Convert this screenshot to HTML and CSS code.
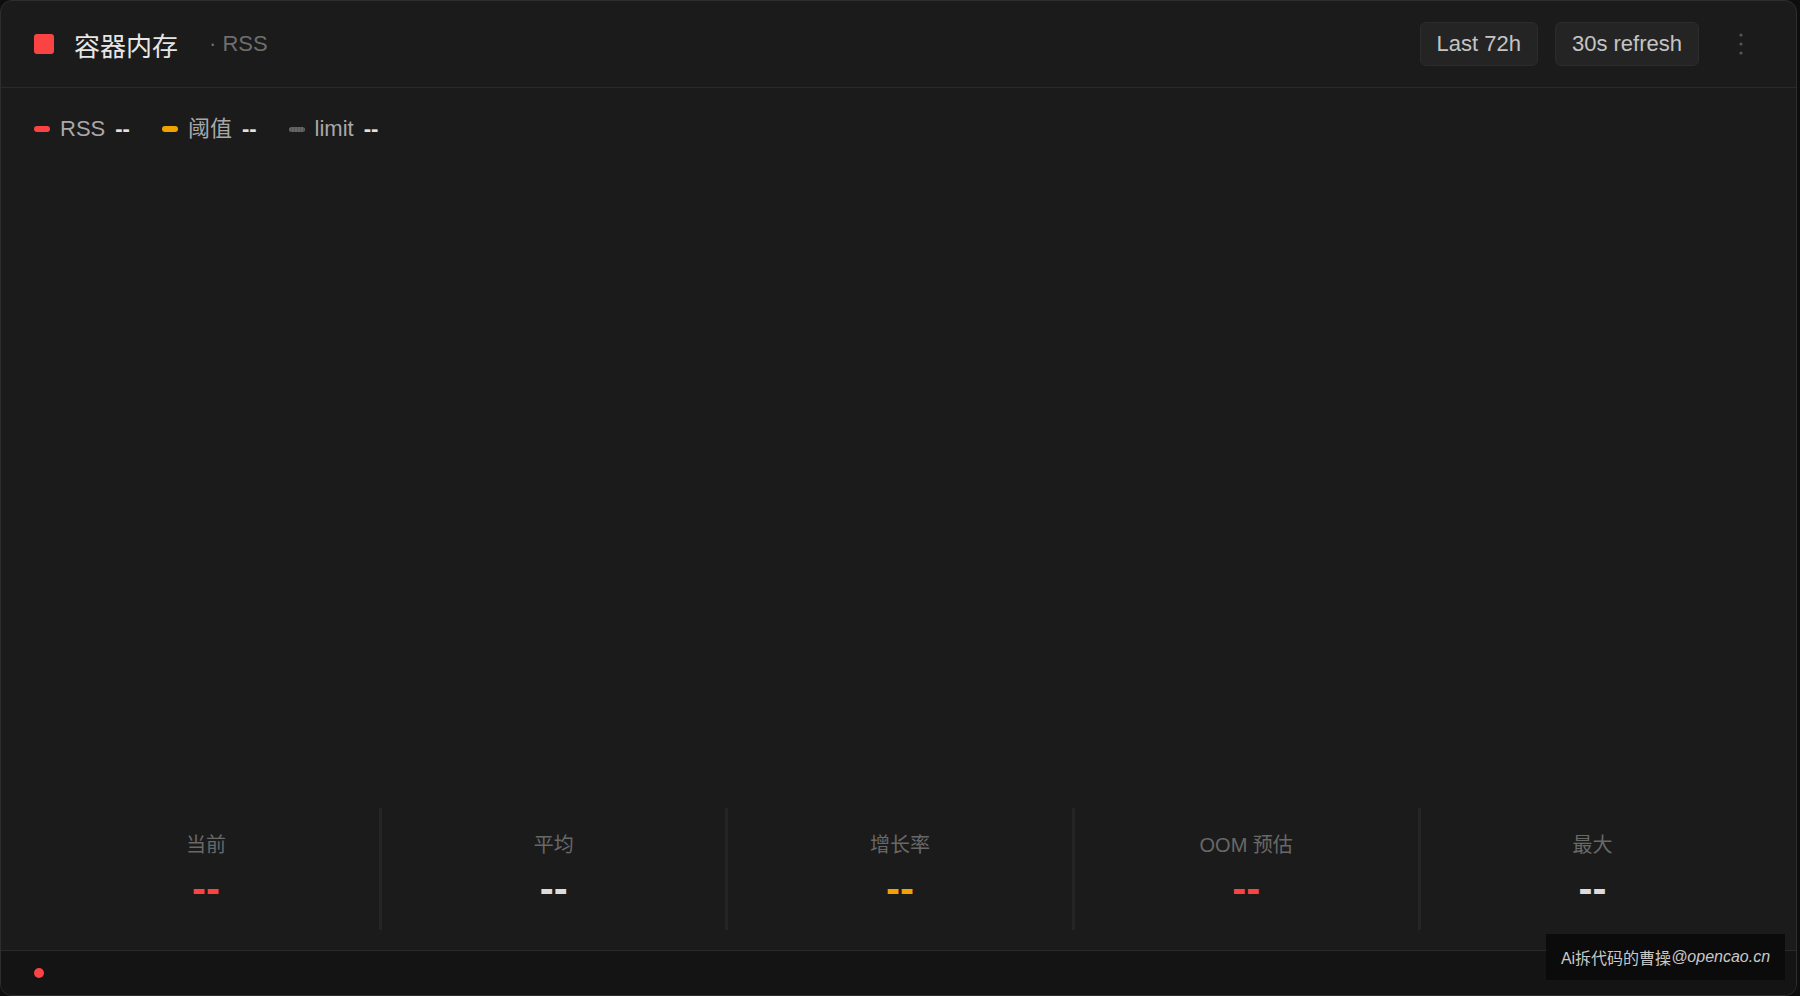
FILE: index.html
```html
<!DOCTYPE html>
<html lang="zh-CN">
<head>
    <meta charset="UTF-8">
    <meta name="viewport" content="width=device-width, initial-scale=1.0">
    <title>容器内存</title>
    <link rel="stylesheet" href="styles.css">
</head>
<body>
    <div class="panel">
        <div class="panel-header">
            <span class="panel-mark"></span>
            <h1 class="panel-title">容器内存</h1>
            <span class="panel-sub">· RSS</span>
            <div class="panel-actions">
                <button class="chip" type="button">Last 72h</button>
                <button class="chip" type="button">30s refresh</button>
                <button class="more" type="button" aria-label="more">
                    <svg width="6" height="24" viewBox="0 0 6 24">
                        <circle cx="3" cy="3" r="1.6"/>
                        <circle cx="3" cy="12" r="1.6"/>
                        <circle cx="3" cy="21" r="1.6"/>
                    </svg>
                </button>
            </div>
        </div>

        <div class="legend">
            <div class="legend-item">
                <span class="swatch swatch-red"></span>
                <span class="legend-name">RSS</span>
                <span class="legend-val">--</span>
            </div>
            <div class="legend-item">
                <span class="swatch swatch-orange"></span>
                <span class="legend-name">阈值</span>
                <span class="legend-val">--</span>
            </div>
            <div class="legend-item">
                <span class="swatch swatch-gray"></span>
                <span class="legend-name">limit</span>
                <span class="legend-val">--</span>
            </div>
        </div>

        <div class="chart" id="chart"></div>

        <div class="stats">
            <div class="stat">
                <div class="stat-label">当前</div>
                <div class="stat-value red">--</div>
            </div>
            <div class="stat">
                <div class="stat-label">平均</div>
                <div class="stat-value">--</div>
            </div>
            <div class="stat">
                <div class="stat-label">增长率</div>
                <div class="stat-value orange">--</div>
            </div>
            <div class="stat">
                <div class="stat-label">OOM 预估</div>
                <div class="stat-value red">--</div>
            </div>
            <div class="stat">
                <div class="stat-label">最大</div>
                <div class="stat-value">--</div>
            </div>
        </div>

        <div class="panel-footer">
            <span class="status-dot"></span>
        </div>
    </div>

    <div class="watermark">Ai拆代码的曹操<span class="wm-site">@opencao.cn</span></div>
</body>
</html>
```

FILE: styles.css
```css
html, body {
    height: 100%;
}

body {
    margin: 0;
    background-color: #0e0e0e;
    font-family: "Liberation Sans", "Noto Sans CJK SC", sans-serif;
    color: #e0e0e0;
}

.panel {
    box-sizing: border-box;
    width: calc(100% - 3px);
    height: 100%;
    display: flex;
    flex-direction: column;
    background-color: #1b1b1b;
    border: 1px solid #2e2e2e;
    border-radius: 12px;
    overflow: hidden;
}

/* header */
.panel-header {
    height: 86px;
    flex-shrink: 0;
    display: flex;
    align-items: center;
    padding: 0 35px 0 33px;
    border-bottom: 1px solid #2a2a2a;
}

.panel-mark {
    width: 20px;
    height: 20px;
    border-radius: 3px;
    background-color: #fa4343;
    margin-right: 20px;
}

.panel-title {
    margin: 0;
    font-size: 26px;
    font-weight: normal;
    color: #e6e6e6;
}

.panel-sub {
    margin-left: 31px;
    font-size: 22px;
    color: #6e6e6e;
}

.panel-actions {
    margin-left: auto;
    display: flex;
    align-items: center;
    gap: 17px;
}

.chip {
    height: 44px;
    padding: 0 16px;
    border: 1px solid #2c2c2c;
    border-radius: 6px;
    background-color: #242424;
    color: #c4c4c4;
    font-family: inherit;
    font-size: 22px;
    cursor: pointer;
}

.more {
    width: 40px;
    height: 44px;
    margin-left: 5px;
    padding: 0;
    border: none;
    background: none;
    display: flex;
    align-items: center;
    justify-content: center;
    cursor: pointer;
}

.more svg {
    fill: #555;
}

/* legend */
.legend {
    display: flex;
    align-items: center;
    gap: 32px;
    padding: 28px 33px 0;
    font-size: 22px;
    line-height: 26px;
}

.legend-item {
    display: flex;
    align-items: center;
    gap: 10px;
}

.swatch {
    width: 16px;
    height: 6px;
    border-radius: 3px;
}

.swatch-red { background-color: #fa4343; }
.swatch-orange { background-color: #f2a200; }
.swatch-gray {
    height: 5px;
    background: repeating-linear-gradient(90deg, #666 0 2px, #555 2px 3px);
}

.legend-name {
    color: #a8a8a8;
}

.legend-val {
    color: #e2e2e2;
    font-weight: bold;
}

.chart {
    flex: 1;
}

/* bottom stats */
.stats {
    display: grid;
    grid-template-columns: repeat(5, 1fr);
    padding: 0 32px 20px;
}

.stat {
    height: 122px;
    box-sizing: border-box;
    padding-top: 25px;
    text-align: center;
}

.stat + .stat {
    border-left: 3px solid #252525;
}

.stat-label {
    font-size: 20px;
    line-height: 24px;
    color: #686868;
}

.stat-value {
    margin-top: 11px;
    font-size: 42px;
    line-height: 42px;
    font-weight: bold;
    color: #dcdcdc;
}

.stat-value.red { color: #fa4343; }
.stat-value.orange { color: #f2a200; }

/* footer */
.panel-footer {
    height: 44px;
    flex-shrink: 0;
    display: flex;
    align-items: center;
    padding-left: 33px;
    background-color: #141414;
    border-top: 1px solid #2a2a2a;
}

.status-dot {
    width: 10px;
    height: 10px;
    border-radius: 50%;
    background-color: #fa4343;
}

.watermark {
    position: fixed;
    right: 15px;
    bottom: 16px;
    width: 239px;
    height: 46px;
    display: flex;
    align-items: center;
    justify-content: center;
    background-color: #0b0b0b;
    color: #c8c8c8;
    font-size: 16px;
}

.wm-site {
    font-style: italic;
}
```
